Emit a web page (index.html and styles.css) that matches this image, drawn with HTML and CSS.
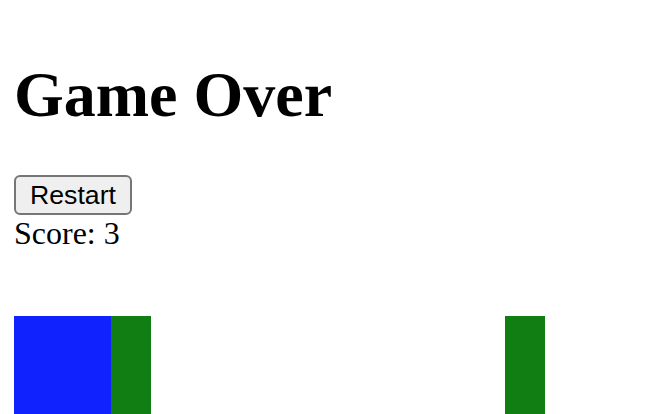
FILE: index.html
```html
<!DOCTYPE html>
<html>
<head>
<meta charset="utf-8">
<link rel="stylesheet" href="styles.css">
</head>
<body>
<div class="page">
  <h1 class="title">Game Over</h1>
  <button class="restart">Restart</button>
  <div class="score">Score: 3</div>
  <div class="game">
    <div class="player"></div>
    <div class="pipe pipe-a"></div>
    <div class="pipe pipe-b"></div>
  </div>
</div>
</body>
</html>
```
FILE: styles.css
```css
html, body {
  margin: 0;
  padding: 0;
  background: #ffffff;
  overflow: hidden;
}
.page {
  padding: 15px 14px 0;
  font-family: "Liberation Serif", "Times New Roman", serif;
  color: #000;
}
.title {
  font-size: 64px;
  font-weight: bold;
  margin: 43px 0;
  line-height: normal;
}
.restart {
  display: block;
  box-sizing: border-box;
  height: 40px;
  font-family: "Liberation Sans", Arial, sans-serif;
  font-size: 26.67px;
  padding: 0 14px;
  border: 2px solid #767676;
  border-radius: 6px;
  background: #efefef;
  color: #000;
}
.score {
  font-size: 32px;
  line-height: normal;
}
.game {
  position: relative;
  margin-top: 64px;
  height: 98px;
}
.player {
  position: absolute;
  left: 0;
  top: 0;
  width: 97px;
  height: 98px;
  background: #1023ff;
}
.pipe {
  position: absolute;
  top: 0;
  width: 40px;
  height: 98px;
  background: #107e12;
}
.pipe-a { left: 97px; }
.pipe-b { left: 491px; }
```
